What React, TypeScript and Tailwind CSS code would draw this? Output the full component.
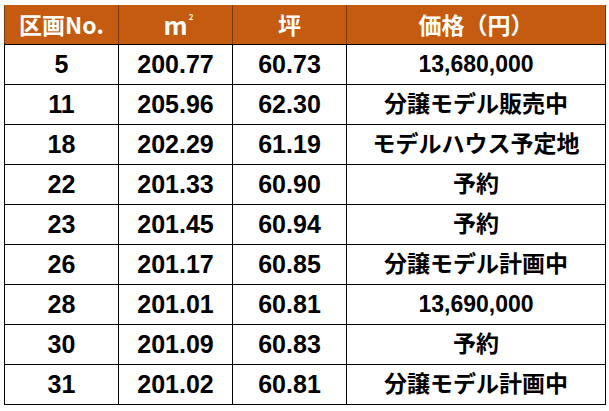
const rows = [
  { no: "5", m2: "200.77", tsubo: "60.73", price: "13,680,000" },
  { no: "11", m2: "205.96", tsubo: "62.30", price: "分譲モデル販売中" },
  { no: "18", m2: "202.29", tsubo: "61.19", price: "モデルハウス予定地" },
  { no: "22", m2: "201.33", tsubo: "60.90", price: "予約" },
  { no: "23", m2: "201.45", tsubo: "60.94", price: "予約" },
  { no: "26", m2: "201.17", tsubo: "60.85", price: "分譲モデル計画中" },
  { no: "28", m2: "201.01", tsubo: "60.81", price: "13,690,000" },
  { no: "30", m2: "201.09", tsubo: "60.83", price: "予約" },
  { no: "31", m2: "201.02", tsubo: "60.81", price: "分譲モデル計画中" },
];

const font = "font-['Liberation_Sans','Noto_Sans_CJK_JP',sans-serif]";
const th =
  "border border-t-[#c55a11] border-x-[#7a3a0e] border-b-black pb-[2px] font-['Noto_Sans_CJK_JP',sans-serif] text-[23px] font-bold";

export default function App() {
  return (
    <div className="h-[411px] w-[609px] overflow-hidden bg-white pl-[4px] pt-[5px]">
      <table className={`border-collapse text-center text-[25px] font-bold leading-none ${font}`}>
        <colgroup>
          <col className="w-[114px]" />
          <col className="w-[114px]" />
          <col className="w-[114px]" />
          <col className="w-[259px]" />
        </colgroup>
        <thead>
          <tr className="h-[39px] bg-[#c55a11] text-white">
            <th className={th}>区画No.</th>
            <th className={th}>
              <span className="relative text-[25px]">
                m
                <span className="absolute -right-[6px] top-[7px] text-[8px] leading-none">2</span>
              </span>
            </th>
            <th className={th}>坪</th>
            <th className={th}>価格（円）</th>
          </tr>
        </thead>
        <tbody className="text-black">
          {rows.map((r) => (
            <tr key={r.no} className="h-[40px]">
              <td className="border border-black">{r.no}</td>
              <td className="border border-black">{r.m2}</td>
              <td className="border border-black">{r.tsubo}</td>
              <td className="border border-black text-[23px]">{r.price}</td>
            </tr>
          ))}
        </tbody>
      </table>
    </div>
  );
}
